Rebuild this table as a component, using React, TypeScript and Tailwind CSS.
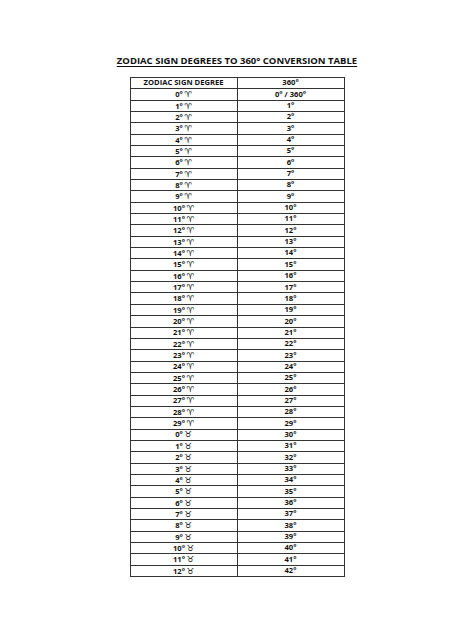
const ARIES = "\u2648\uFE0E";
const TAURUS = "\u2649\uFE0E";

const rows: { n: string; sign: string; deg: string }[] = [
  ...Array.from({ length: 30 }, (_, i) => ({
    n: `${i}°`,
    sign: ARIES,
    deg: i === 0 ? "0° / 360°" : `${i}°`,
  })),
  ...Array.from({ length: 13 }, (_, i) => ({
    n: `${i}°`,
    sign: TAURUS,
    deg: `${30 + i}°`,
  })),
];

export default function App() {
  return (
    <div
      className="flex min-h-[632px] w-[474px] flex-col items-center bg-white pt-[55px] text-[#111]"
      style={{ fontFamily: '"Open Sans", "DejaVu Sans", sans-serif' }}
    >
      <h1 className="text-[9.5px] font-bold leading-[12px] underline underline-offset-[2px]">
        ZODIAC SIGN DEGREES TO 360° CONVERSION TABLE
      </h1>

      <table className="mt-[10px] w-[215px] table-fixed border-collapse text-center text-[7.6px] font-bold">
        <thead>
          <tr className="h-[11.3px]">
            <th className="w-1/2 border border-[#333] p-0 font-bold leading-none">
              ZODIAC SIGN DEGREE
            </th>
            <th className="w-1/2 border border-[#333] p-0 font-bold leading-none">
              360°
            </th>
          </tr>
        </thead>
        <tbody>
          {rows.map((r) => (
            <tr key={r.deg} className="h-[11.35px]">
              <td className="border border-[#333] p-0 leading-none">
                {r.n}
                <span className="ml-[1.5px] font-['DejaVu_Sans',sans-serif] text-[8.5px] font-bold">
                  {r.sign}
                </span>
              </td>
              <td className="border border-[#333] p-0 leading-none">{r.deg}</td>
            </tr>
          ))}
        </tbody>
      </table>
    </div>
  );
}
